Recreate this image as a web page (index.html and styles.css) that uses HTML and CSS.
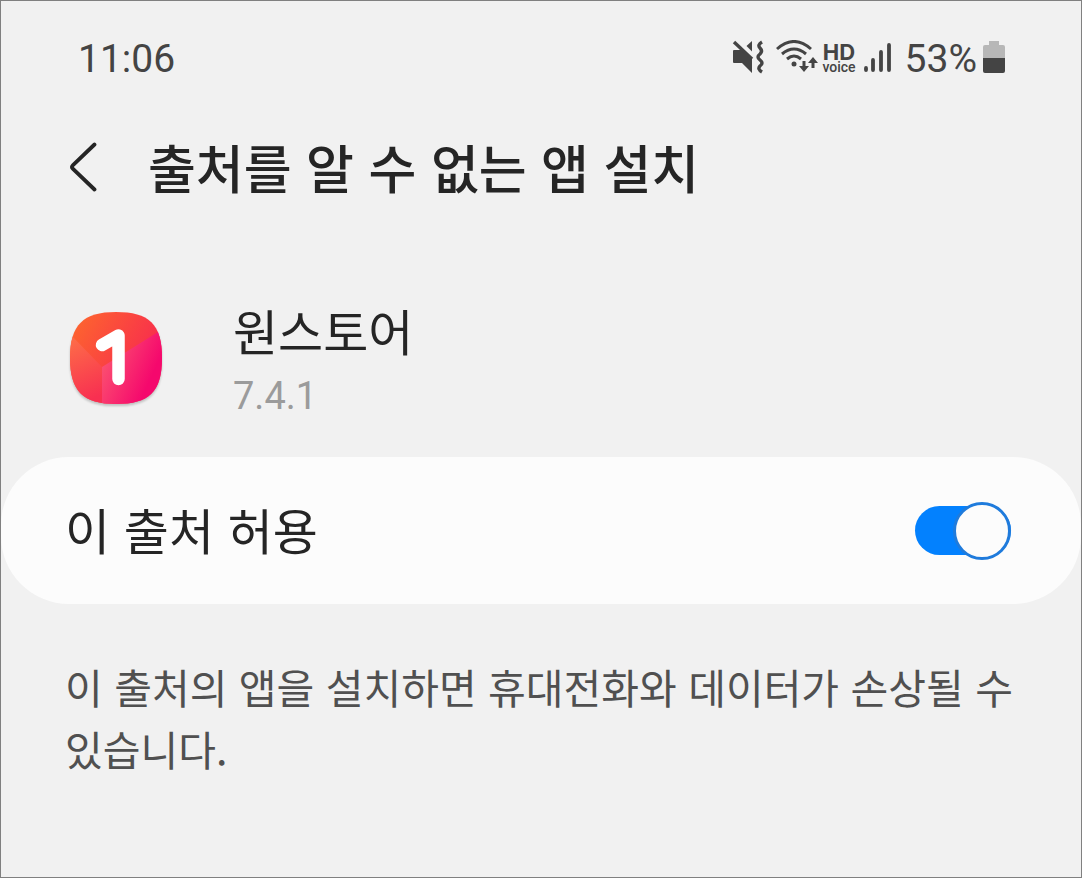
FILE: index.html
```html
<!DOCTYPE html>
<html lang="ko">
<head>
    <meta charset="UTF-8">
    <meta name="viewport" content="width=device-width, initial-scale=1.0">
    <title>출처를 알 수 없는 앱 설치</title>
    <link rel="stylesheet" href="styles.css">
</head>
<body>
    <div class="status-bar">
        <span class="status-text">11:06</span>
        <div class="status-icons">
            <!-- Vibrate / muted -->
            <svg class="icon-mute" width="34" height="34" viewBox="0 0 34 34">
                <path d="M2 10h8l10-9v32L10 23H2q-1 0-1-1V11q0-1 1-1z" fill="#444"></path>
                <path d="M5 0l18 18" stroke="#f1f1f1" stroke-width="5"></path>
                <path d="M2 2l18 17" stroke="#444" stroke-width="3.4"></path>
                <path d="M30 2q-5 3-2 6t0 6q-4 3 0 6t0 6q-3 3 2 6" fill="none" stroke="#444" stroke-width="3.4"></path>
            </svg>
            <!-- Wi-Fi -->
            <svg class="icon-wifi" width="42" height="34" viewBox="0 0 42 34">
                <g fill="none" stroke="#444" stroke-width="3">
                    <path d="M1 9q17-15 34 0"></path>
                    <path d="M6 14q12-10 24 0"></path>
                    <path d="M11 19q7-6 14 0"></path>
                    <path d="M28 21v8M37 28v-8"></path>
                </g>
                <circle cx="18" cy="24" r="2.5" fill="#444"></circle>
                <path d="M23 26h10l-5 6zM32 23h10l-5-6z" fill="#444"></path>
            </svg>
            <div class="hd-voice"><b>HD</b><span>voice</span></div>
            <!-- Signal -->
            <svg class="icon-signal" width="30" height="34" viewBox="0 0 30 34">
                <path d="M4 28v2M11 20v10M19 12v18M27 5v25" stroke="#444" stroke-width="3.8" stroke-linecap="round"></path>
            </svg>
            <span class="status-text">53%</span>
            <!-- Battery -->
            <svg class="icon-battery" width="22" height="34" viewBox="0 0 22 34">
                <path d="M6 1h10v4h4q2 0 2 2v11H0V7q0-2 2-2h4z" fill="#b7b7b7"></path>
                <path d="M0 18h22v13q0 2-2 2H2q-2 0-2-2z" fill="#444"></path>
            </svg>
        </div>
    </div>

    <header class="header">
        <button class="back-btn" type="button" aria-label="뒤로">
            <svg width="28" height="50" viewBox="0 0 28 50">
                <path d="M25.500 2.500L4 23q-2 2 0 4l21.500 20.500" fill="none" stroke="#252525" stroke-width="3.8" stroke-linecap="round"></path>
            </svg>
        </button>
        <h1>출처를 알 수 없는 앱 설치</h1>
    </header>

    <main>
        <section class="app-info">
            <svg class="app-icon" width="94" height="94" viewBox="0 0 94 94">
                <defs>
                    <linearGradient id="base" gradientUnits="userSpaceOnUse" x1="10" y1="10" x2="75" y2="50">
                        <stop offset="0" stop-color="#fd6230"></stop>
                        <stop offset="1" stop-color="#f82f4c"></stop>
                    </linearGradient>
                    <linearGradient id="fold" gradientUnits="userSpaceOnUse" x1="33" y1="56" x2="78" y2="76">
                        <stop offset="0" stop-color="#fb4e70"></stop>
                        <stop offset="1" stop-color="#f5086d"></stop>
                    </linearGradient>
                    <linearGradient id="side" gradientUnits="userSpaceOnUse" x1="4" y1="30" x2="30" y2="85">
                        <stop offset="0" stop-color="#fd6a48"></stop>
                        <stop offset="1" stop-color="#f82f51"></stop>
                    </linearGradient>
                    <clipPath id="shape">
                        <path d="M47 1C80 1 93 13 93 47S80 93 47 93 1 80 1 47 14 1 47 1z"></path>
                    </clipPath>
                </defs>
                <g clip-path="url(#shape)">
                    <path d="M0 0h94v94H0z" fill="url(#base)"></path>
                    <path d="M0 22l33 34v38H0z" fill="url(#side)"></path>
                    <path d="M33 56l61-38v76H33z" fill="url(#fold)"></path>
                </g>
                <path d="M33 34l16.500-9.500V68" fill="none" stroke="#fff" stroke-width="12.5" stroke-linecap="round" stroke-linejoin="round"></path>
            </svg>
            <div class="app-text">
                <h2>원스토어</h2>
                <p class="version">7.4.1</p>
            </div>
        </section>

        <label class="allow-row" for="allow-source">
            <span class="allow-text">이 출처 허용</span>
            <input type="checkbox" role="switch" id="allow-source" class="switch" checked>
        </label>

        <p class="description">이 출처의 앱을 설치하면 휴대전화와 데이터가 손상될 수 있습니다.</p>
    </main>
</body>
</html>
```

FILE: styles.css
```css
* {
    box-sizing: border-box;
}

body {
    margin: 0;
    min-height: 100vh;
    border: 1px solid #808080;
    background-color: #f1f1f1;
    color: #252525;
    font-family: "Noto Sans CJK KR", sans-serif;
    word-break: keep-all;
}

h1, h2, p {
    margin: 0;
    font-weight: 400;
}

.status-bar {
    display: flex;
    justify-content: space-between;
    align-items: center;
    padding: 29px 76px 0 77px;
    color: #444;
    font-family: Roboto, sans-serif;
}

.status-text {
    padding-top: 4px;
    font-size: 39px;
    line-height: 50px;
}

.status-icons {
    display: flex;
    align-items: center;
}

.icon-mute {
    margin-right: 10px;
}

.icon-wifi {
    margin-right: 4px;
}

.icon-signal {
    margin: 0 13px 0 6px;
}

.icon-battery {
    margin-left: 6px;
}

.hd-voice {
    display: flex;
    flex-direction: column;
    align-items: center;
    padding-top: 3px;
    font-size: 14px;
    font-weight: 500;
    line-height: 14px;
}

.hd-voice b {
    font-family: Inter, sans-serif;
    font-size: 22px;
    line-height: 16px;
}

.header {
    display: flex;
    align-items: center;
    padding: 43px 68px 0;
}

.back-btn {
    display: flex;
    margin-right: 51px;
    padding: 0;
    border: none;
    background: none;
    cursor: pointer;
}

.header h1 {
    font-size: 52px;
    font-weight: 500;
    line-height: 80px;
}

.app-info {
    display: flex;
    align-items: center;
    padding: 91px 68px 34px;
}

.app-icon {
    flex: none;
    margin: 0 70px 5px 0;
    filter: drop-shadow(0 2px 1px rgba(0, 0, 0, 0.2));
}

.app-text h2 {
    margin-bottom: 7px;
    font-size: 49px;
    line-height: 64px;
}

.version {
    color: #9b9b9b;
    font-family: Roboto, sans-serif;
    font-size: 38px;
    line-height: 54px;
}

.allow-row {
    display: flex;
    justify-content: space-between;
    align-items: center;
    min-height: 147px;
    padding: 0 70px 0 64px;
    border-radius: 68px;
    background-color: #fcfcfc;
    font-size: 49px;
    cursor: pointer;
}

.allow-text {
    padding-bottom: 4px;
}

.switch {
    appearance: none;
    display: flex;
    align-items: center;
    flex: none;
    width: 96px;
    height: 49px;
    margin: 0;
    border-radius: 25px;
    background-color: #b0b0b0;
    cursor: pointer;
}

.switch::before {
    content: "";
    flex: none;
    width: 52px;
    height: 52px;
    border: 3px solid #888;
    border-radius: 50%;
    background-color: #fcfcfc;
}

.switch:checked {
    justify-content: flex-end;
    background-color: #0381fe;
}

.switch:checked::before {
    border-color: #1f7bdc;
}

.description {
    padding: 51px 60px 51px 64px;
    color: #505050;
    font-size: 41px;
    line-height: 62px;
}
```
